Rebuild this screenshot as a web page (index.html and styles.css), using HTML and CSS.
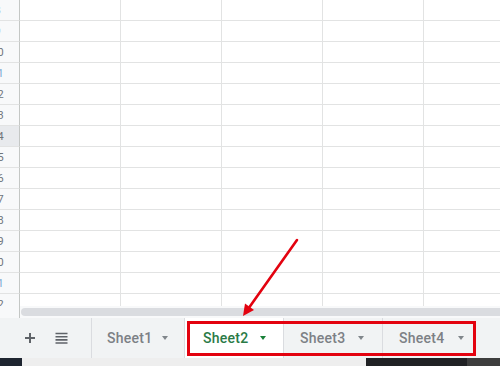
FILE: index.html
```html
<!DOCTYPE html>
<html>
<head>
<meta charset="utf-8">
<link rel="stylesheet" href="styles.css">
</head>
<body>
<div class="page">
  <div class="grid">
    <div class="row"><div class="rh"><span>8</span></div><div class="c"></div><div class="c"></div><div class="c"></div><div class="c"></div><div class="c last"></div></div>
    <div class="row"><div class="rh"><span>9</span></div><div class="c"></div><div class="c"></div><div class="c"></div><div class="c"></div><div class="c last"></div></div>
    <div class="row"><div class="rh"><span>10</span></div><div class="c"></div><div class="c"></div><div class="c"></div><div class="c"></div><div class="c last"></div></div>
    <div class="row"><div class="rh blue"><span>11</span></div><div class="c"></div><div class="c"></div><div class="c"></div><div class="c"></div><div class="c last"></div></div>
    <div class="row"><div class="rh"><span>12</span></div><div class="c"></div><div class="c"></div><div class="c"></div><div class="c"></div><div class="c last"></div></div>
    <div class="row"><div class="rh"><span>13</span></div><div class="c"></div><div class="c"></div><div class="c"></div><div class="c"></div><div class="c last"></div></div>
    <div class="row"><div class="rh hover"><span>14</span></div><div class="c"></div><div class="c"></div><div class="c"></div><div class="c"></div><div class="c last"></div></div>
    <div class="row"><div class="rh"><span>15</span></div><div class="c"></div><div class="c"></div><div class="c"></div><div class="c"></div><div class="c last"></div></div>
    <div class="row"><div class="rh"><span>16</span></div><div class="c"></div><div class="c"></div><div class="c"></div><div class="c"></div><div class="c last"></div></div>
    <div class="row"><div class="rh"><span>17</span></div><div class="c"></div><div class="c"></div><div class="c"></div><div class="c"></div><div class="c last"></div></div>
    <div class="row"><div class="rh"><span>18</span></div><div class="c"></div><div class="c"></div><div class="c"></div><div class="c"></div><div class="c last"></div></div>
    <div class="row"><div class="rh"><span>19</span></div><div class="c"></div><div class="c"></div><div class="c"></div><div class="c"></div><div class="c last"></div></div>
    <div class="row"><div class="rh"><span>20</span></div><div class="c"></div><div class="c"></div><div class="c"></div><div class="c"></div><div class="c last"></div></div>
    <div class="row"><div class="rh blue"><span>21</span></div><div class="c"></div><div class="c"></div><div class="c"></div><div class="c"></div><div class="c last"></div></div>
    <div class="row"><div class="rh"><span>22</span></div><div class="c"></div><div class="c"></div><div class="c"></div><div class="c"></div><div class="c last"></div></div>
  </div>
  <div class="hscroll">
    <div class="hs-corner"></div>
    <div class="hs-track"><div class="hs-thumb"></div></div>
  </div>
  <div class="tabbar">
    <div class="iconbtn">
      <svg width="12" height="12" viewBox="0 0 12 12"><path d="M6 1v10M1 6h10" stroke="#5f6368" stroke-width="2" fill="none"/></svg>
    </div>
    <div class="iconbtn">
      <svg width="13" height="12" viewBox="0 0 13 12"><path d="M0.5 1.5h12M0.5 4.7h12M0.5 7.9h12M0.5 11h12" stroke="#5f6368" stroke-width="1.6" fill="none"/></svg>
    </div>
    <div class="sep"></div>
    <div class="tab first"><span class="label">Sheet1</span><span class="caret"></span></div>
    <div class="tab active"><span class="label">Sheet2</span><span class="caret"></span></div>
    <div class="tab"><span class="label">Sheet3</span><span class="caret"></span></div>
    <div class="tab lasttab"><span class="label">Sheet4</span><span class="caret"></span></div>
  </div>
  <div class="strip">
    <div class="s1"></div><div class="s2"></div><div class="s3"></div><div class="s4"></div>
  </div>
  <div class="highlight-box"></div>
  <svg class="annot" width="500" height="366" viewBox="0 0 500 366">
    <line x1="297" y1="240" x2="249.5" y2="307" stroke="#e3020f" stroke-width="2.6" stroke-linecap="round"/>
    <polygon points="243,316 254,310 245,303.5" fill="#e3020f"/>
  </svg>
</div>
</body>
</html>
```

FILE: styles.css
```css
html, body {
  margin: 0;
  padding: 0;
  background: #ffffff;
}
.page {
  position: relative;
  width: 500px;
  height: 366px;
  overflow: hidden;
  font-family: Roboto, "Liberation Sans", Arial, sans-serif;
  display: flex;
  flex-direction: column;
}
.grid {
  height: 306px;
  overflow: hidden;
  flex: none;
}
.row {
  display: grid;
  grid-template-columns: 20px 101px 101px 101px 101px 1fr;
  height: 21px;
}
.row > div {
  border-right: 1px solid #e2e3e3;
  border-bottom: 1px solid #e2e3e3;
}
.row > .last {
  border-right: none;
}
.rh {
  background: #f8f9fa;
  border-right: 1px solid #c4c7c5 !important;
  display: flex;
  justify-content: flex-end;
  align-items: center;
  padding-right: 13px;
  overflow: hidden;
  font-size: 11px;
  color: #70757a;
  white-space: nowrap;
}
.rh span {
  flex: none;
  width: 17px;
  text-align: center;
}
.rh.hover {
  background: #e8eaed;
}
.rh.blue {
  color: #7aa6d2;
}
.hscroll {
  height: 12px;
  flex: none;
  display: flex;
  background: #ffffff;
}
.hs-corner {
  width: 19px;
  border-right: 1px solid #c4c7c5;
  background: #f8f9fa;
}
.hs-track {
  flex: 1;
  padding: 2px 0 0 1px;
  background: #f8f9fa;
}
.hs-thumb {
  height: 8px;
  border-radius: 4px;
  background: #dadce0;
  margin-right: -10px;
}
.tabbar {
  height: 40px;
  flex: none;
  background: #f1f3f4;
  display: flex;
  align-items: stretch;
  padding-left: 18px;
}
.iconbtn {
  width: 24px;
  display: flex;
  align-items: center;
  justify-content: center;
  margin-right: 7px;
}
.sep {
  width: 1px;
  background: #dadce0;
  margin-left: 11px;
}
.tab {
  box-sizing: border-box;
  width: 99px;
  display: flex;
  align-items: center;
  padding: 0 18px 0 16px;
  border-right: 1px solid #dadce0;
  font-size: 14px;
  font-weight: 500;
  letter-spacing: 0.25px;
  color: #7c8085;
}
.tab.first {
  width: 93px;
  padding: 0 16px 0 15px;
}
.tab.active {
  background: #ffffff;
  color: #2a7a46;
  padding: 0 17px 0 18px;
}
.tab.lasttab {
  border-right: none;
}
.caret {
  width: 0;
  height: 0;
  margin-left: auto;
  border-left: 3.5px solid transparent;
  border-right: 3.5px solid transparent;
  border-top: 4px solid #80868b;
}
.tab.active .caret {
  border-top-color: #188038;
}
.strip {
  flex: 1;
  display: flex;
}
.s1 { width: 22px; background: #1e2530; }
.s2 { width: 344px; background: #eeeeee; }
.s3 { width: 101px; background: #202124; }
.s4 { flex: 1; background: #3d3d3d; }
.highlight-box {
  position: absolute;
  left: 187px;
  top: 321px;
  width: 289px;
  height: 35px;
  box-sizing: border-box;
  border: 3px solid #e3020f;
}
.annot {
  position: absolute;
  left: 0;
  top: 0;
  pointer-events: none;
}
```
